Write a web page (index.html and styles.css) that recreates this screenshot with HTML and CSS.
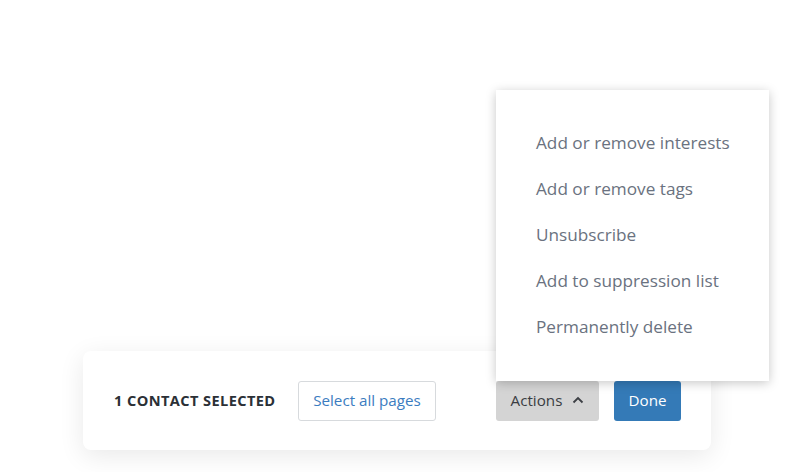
FILE: index.html
```html
<!DOCTYPE html>
<html>
<head>
<meta charset="utf-8">
<link rel="stylesheet" href="styles.css">
</head>
<body>
<div class="page">
  <div class="bar">
    <span class="count">1 CONTACT SELECTED</span>
    <button class="btn btn-outline">Select all pages</button>
    <div class="actions">
      <ul class="menu">
        <li>Add or remove interests</li>
        <li>Add or remove tags</li>
        <li>Unsubscribe</li>
        <li>Add to suppression list</li>
        <li>Permanently delete</li>
      </ul>
      <button class="btn btn-grey">Actions
        <svg class="chev" width="12" height="8" viewBox="0 0 12 8"><path d="M1.5 6.5 L6 2 L10.5 6.5" fill="none" stroke="#3c3f44" stroke-width="1.8"/></svg>
      </button>
    </div>
    <button class="btn btn-blue">Done</button>
  </div>
</div>
</body>
</html>
```
FILE: styles.css
```css
html, body {
  margin: 0;
  padding: 0;
  background: #ffffff;
}
body {
  font-family: "Open Sans", "Lato", sans-serif;
  width: 809px;
  height: 472px;
  overflow: hidden;
}
.page {
  padding: 351px 0 0 83px;
}
.bar {
  width: 628px;
  height: 99px;
  box-sizing: border-box;
  background: #fff;
  border-radius: 8px;
  box-shadow: 0 6px 26px rgba(0,0,0,0.09);
  display: flex;
  align-items: center;
  padding: 0 30px 0 31px;
}
.count {
  width: 163px;
  white-space: nowrap;
  font-size: 14.6px;
  letter-spacing: 0.4px;
  font-weight: 700;
  color: #2b3036;
  padding-bottom: 1px;
}
.btn {
  font-family: inherit;
  height: 40px;
  box-sizing: border-box;
  border-radius: 3px;
  font-size: 15.2px;
  display: inline-flex;
  align-items: center;
  justify-content: center;
  cursor: pointer;
  padding: 0 0 2px;
}
.btn-outline {
  margin-left: 21px;
  width: 138px;
  border: 1px solid #d7dadd;
  background: #fff;
  color: #3b7cc0;
}
.actions {
  position: relative;
  margin-left: 60px;
}
.btn-grey {
  width: 103px;
  border: none;
  background: #d4d4d4;
  color: #3a3d42;
  gap: 10px;
}
.chev {
  display: block;
}
.btn-blue {
  margin-left: 15px;
  width: 67px;
  border: none;
  background: #347ab7;
  color: #fff;
}
.menu {
  position: absolute;
  left: 0;
  bottom: 40px;
  width: 273px;
  margin: 0;
  padding: 30px 0 31px;
  list-style: none;
  background: #fff;
  box-shadow: 0 2px 10px rgba(0,0,0,0.22);
}
.menu li {
  height: 46px;
  line-height: 46px;
  padding-left: 40px;
  font-size: 17.2px;
  color: #6a7280;
  white-space: nowrap;
}
```
